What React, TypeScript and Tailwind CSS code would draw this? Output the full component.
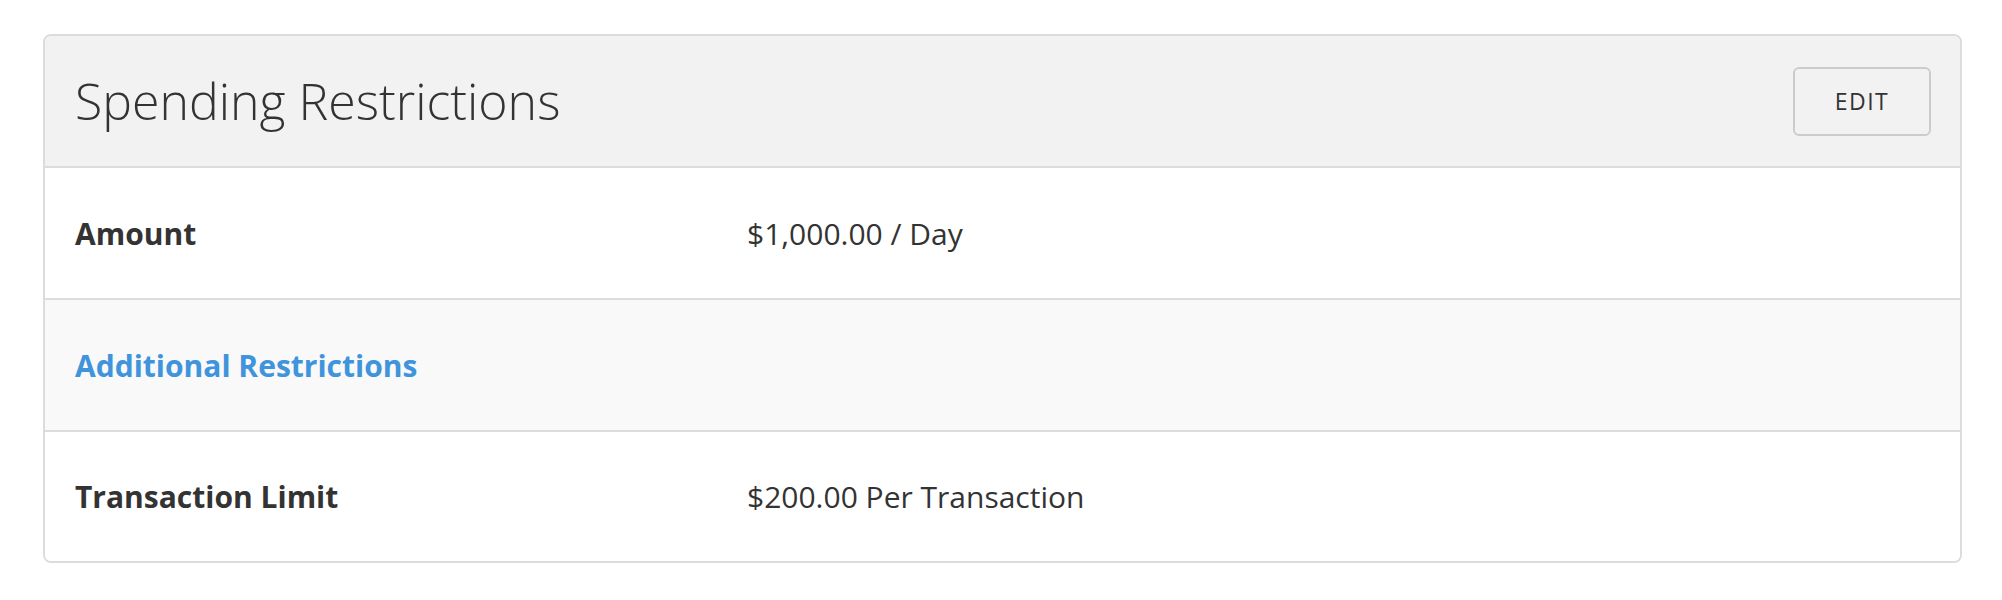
/**
 * SpendingRestrictions
 *
 * Card showing the spending limits set on a card, with an edit button.
 */

interface RestrictionRow {
  label: string;
  value: string;
}

const rows: RestrictionRow[] = [{ label: 'Amount', value: '$1,000.00 / Day' }];

const additionalRows: RestrictionRow[] = [
  { label: 'Transaction Limit', value: '$200.00 Per Transaction' },
];

function Row({ row, last = false }: { row: RestrictionRow; last?: boolean }) {
  return (
    <div
      className={
        last
          ? 'flex h-[129px] items-center bg-white px-[30px]'
          : 'flex h-[132px] items-center border-b-2 border-[#dcdcdc] bg-white px-[30px]'
      }
    >
      <div className="w-[672px] shrink-0 text-[30px] font-bold text-[#333333]">{row.label}</div>
      <div className="text-[30px] text-[#333333]">{row.value}</div>
    </div>
  );
}

export default function App() {
  return (
    <div
      className="min-h-[600px] bg-white pt-[34px] pl-[43px] pr-[40px]"
      style={{ fontFamily: '"Open Sans", "Noto Sans", sans-serif' }}
    >
      <div className="overflow-hidden rounded-[8px] border-2 border-[#dcdcdc]">
        <div className="flex h-[132px] items-center justify-between border-b-2 border-[#dcdcdc] bg-[#f2f2f2] pl-[30px] pr-[29px]">
          <h2 className="text-[50px] font-light text-[#333333]">Spending Restrictions</h2>
          <button className="flex h-[69px] w-[138px] items-center justify-center rounded-[6px] border-2 border-[#cccccc] bg-[#f2f2f2] text-[23px] tracking-[1.5px] text-[#333333]">
            EDIT
          </button>
        </div>

        {rows.map((row) => (
          <Row key={row.label} row={row} />
        ))}

        <div className="flex h-[132px] items-center border-b-2 border-[#dcdcdc] bg-[#f9f9f9] px-[30px]">
          <span className="text-[30px] font-bold text-[#4094dc]">Additional Restrictions</span>
        </div>

        {additionalRows.map((row, i) => (
          <Row key={row.label} row={row} last={i === additionalRows.length - 1} />
        ))}
      </div>
    </div>
  );
}
